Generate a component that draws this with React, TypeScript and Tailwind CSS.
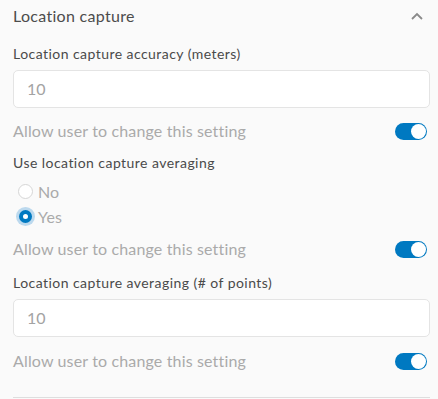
import React from 'react';

const Toggle: React.FC = () => (
  <div className="w-[32px] h-[17px] rounded-full bg-[#0079c1] flex items-center justify-end pr-[1px]">
    <div className="w-[15px] h-[15px] rounded-full bg-white" />
  </div>
);

const AllowRow: React.FC<{ className?: string }> = ({ className = '' }) => (
  <div className={`h-[24px] flex items-center justify-between ${className}`}>
    <span className="text-[16px] text-[#aaaaaa] tracking-[0.15px]">Allow user to change this setting</span>
    <div className="mr-[3px]">
      <Toggle />
    </div>
  </div>
);

const NumberField: React.FC<{ value: string; className?: string }> = ({ value, className = '' }) => (
  <div
    className={`h-[38px] bg-white border border-[#e4e4e4] rounded-[5px] flex items-center pl-[13px] text-[16px] text-[#a3a3a3] ${className}`}
  >
    {value}
  </div>
);

const Radio: React.FC<{ label: string; checked?: boolean }> = ({ label, checked }) => (
  <div className="h-[25px] flex items-center">
    <div className="w-[24px] flex items-center justify-center">
      {checked ? (
        <div className="w-[19px] h-[19px] rounded-full bg-[#bcd9ee] flex items-center justify-center">
          <div className="w-[13px] h-[13px] rounded-full border-[4px] border-[#0079c1] bg-white" />
        </div>
      ) : (
        <div className="w-[15px] h-[15px] rounded-full border border-[#d6d6d6] bg-white" />
      )}
    </div>
    <span className="ml-[1px] text-[16px] text-[#aaaaaa] tracking-[0.15px]">{label}</span>
  </div>
);

export default function App() {
  return (
    <div
      className="w-full min-h-screen bg-[#fafafa] pl-[13px] pr-[8px] text-[#4a4a4a]"
      style={{ fontFamily: 'Lato, "Noto Sans", sans-serif' }}
    >
      <div className="h-[31px] flex items-center justify-between">
        <span className="text-[16px] text-[#4c4c4c] tracking-[0.3px]">Location capture</span>
        <svg width="12" height="8" viewBox="0 0 12 8" className="mr-[7px]">
          <path d="M1 7 L6 2 L11 7" fill="none" stroke="#8a8a8a" strokeWidth="1.8" />
        </svg>
      </div>

      <div className="mt-[12px] h-[20px] flex items-center text-[14px] tracking-[0.45px]">
        Location capture accuracy (meters)
      </div>
      <NumberField value="10" className="mt-[7px]" />
      <AllowRow className="mt-[11px]" />

      <div className="mt-[9px] h-[20px] flex items-center text-[14px] tracking-[0.45px]">
        Use location capture averaging
      </div>
      <div className="mt-[7px]">
        <Radio label="No" />
        <Radio label="Yes" checked />
      </div>
      <AllowRow className="mt-[8px]" />

      <div className="mt-[11px] h-[20px] flex items-center text-[14px] tracking-[0.45px]">
        Location capture averaging (# of points)
      </div>
      <NumberField value="10" className="mt-[7px]" />
      <AllowRow className="mt-[12px]" />

      <div className="mt-[24px] h-px bg-[#dedede]" />
    </div>
  );
}
